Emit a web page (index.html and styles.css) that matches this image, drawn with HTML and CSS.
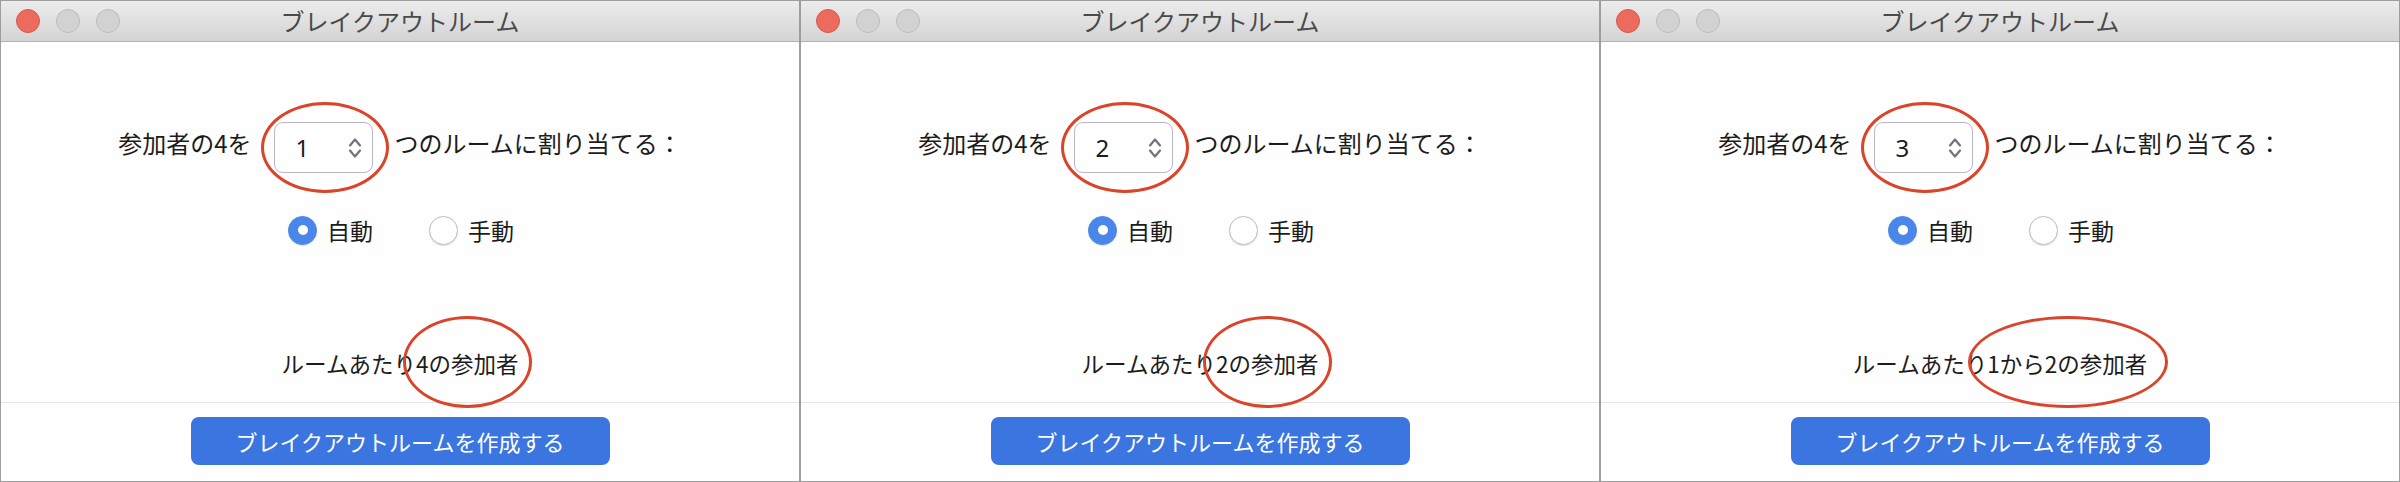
FILE: index.html
```html
<!DOCTYPE html>
<html lang="ja">
<head>
<meta charset="utf-8">
<title>ブレイクアウトルーム</title>
<link rel="stylesheet" href="styles.css">
</head>
<body>
<div class="screens">

  <section class="window">
    <header class="titlebar">
      <div class="lights"><span class="light close"></span><span class="light"></span><span class="light"></span></div>
      <h1 class="title">ブレイクアウトルーム</h1>
      <div></div>
    </header>
    <main class="content">
      <div class="assign">
        <span>参加者の4を</span>
        <div class="spinner"><span class="num">1</span>
          <svg class="arrows" width="14" height="24" viewBox="0 0 14 24"><polyline points="2,9.5 7,3.5 12,9.5"/><polyline points="2,14.5 7,20.5 12,14.5"/></svg>
        </div>
        <span>つのルームに割り当てる：</span>
      </div>
      <div class="modes">
        <label class="radio"><span class="dot on"></span>自動</label>
        <label class="radio"><span class="dot"></span>手動</label>
      </div>
      <p class="per">ルームあたり4の参加者</p>
    </main>
    <footer class="foot"><button class="create">ブレイクアウトルームを作成する</button></footer>
    <span class="mark mark-spin"></span>
    <span class="mark mark-per"></span>
  </section>

  <section class="window">
    <header class="titlebar">
      <div class="lights"><span class="light close"></span><span class="light"></span><span class="light"></span></div>
      <h1 class="title">ブレイクアウトルーム</h1>
      <div></div>
    </header>
    <main class="content">
      <div class="assign">
        <span>参加者の4を</span>
        <div class="spinner"><span class="num">2</span>
          <svg class="arrows" width="14" height="24" viewBox="0 0 14 24"><polyline points="2,9.5 7,3.5 12,9.5"/><polyline points="2,14.5 7,20.5 12,14.5"/></svg>
        </div>
        <span>つのルームに割り当てる：</span>
      </div>
      <div class="modes">
        <label class="radio"><span class="dot on"></span>自動</label>
        <label class="radio"><span class="dot"></span>手動</label>
      </div>
      <p class="per">ルームあたり2の参加者</p>
    </main>
    <footer class="foot"><button class="create">ブレイクアウトルームを作成する</button></footer>
    <span class="mark mark-spin"></span>
    <span class="mark mark-per"></span>
  </section>

  <section class="window">
    <header class="titlebar">
      <div class="lights"><span class="light close"></span><span class="light"></span><span class="light"></span></div>
      <h1 class="title">ブレイクアウトルーム</h1>
      <div></div>
    </header>
    <main class="content">
      <div class="assign">
        <span>参加者の4を</span>
        <div class="spinner"><span class="num">3</span>
          <svg class="arrows" width="14" height="24" viewBox="0 0 14 24"><polyline points="2,9.5 7,3.5 12,9.5"/><polyline points="2,14.5 7,20.5 12,14.5"/></svg>
        </div>
        <span>つのルームに割り当てる：</span>
      </div>
      <div class="modes">
        <label class="radio"><span class="dot on"></span>自動</label>
        <label class="radio"><span class="dot"></span>手動</label>
      </div>
      <p class="per">ルームあたり1から2の参加者</p>
    </main>
    <footer class="foot"><button class="create">ブレイクアウトルームを作成する</button></footer>
    <span class="mark mark-spin"></span>
    <span class="mark mark-per mark-wide"></span>
  </section>

</div>
</body>
</html>
```

FILE: styles.css
```css
* { box-sizing: border-box; }

html, body {
  margin: 0;
  padding: 0;
  background: #ffffff;
}

body {
  font-family: "Noto Sans CJK JP", "Noto Sans", sans-serif;
  color: #1c1c1c;
}

.screens {
  display: flex;
  width: 2400px;
  height: 482px;
}

.window {
  position: relative;
  width: 800px;
  height: 482px;
  flex: none;
  display: flex;
  flex-direction: column;
  border: 1px solid #9d9d9d;
  background: #fefefe;
}

.titlebar {
  height: 41px;
  flex: none;
  display: grid;
  grid-template-columns: 1fr auto 1fr;
  align-items: center;
  background: linear-gradient(#ececec, #d4d4d4);
  border-bottom: 1px solid #b3b3b3;
}

.lights {
  display: flex;
  gap: 16px;
  padding-left: 15px;
}

.light {
  width: 24px;
  height: 24px;
  border-radius: 50%;
  background: #d2d2d2;
  border: 1px solid #bcbcbc;
}

.light.close {
  background: #ec6a5e;
  border-color: #d4594e;
}

.title {
  margin: 0;
  font-size: 24px;
  font-weight: 400;
  color: #4a4a4a;
  line-height: 1;
  letter-spacing: 0;
}

.content {
  flex: 1;
  display: flex;
  flex-direction: column;
  align-items: center;
  padding-top: 71px;
}

.assign {
  display: flex;
  align-items: center;
  justify-content: center;
  gap: 22px;
  font-size: 24px;
  line-height: 30px;
  height: 60px;
}

.spinner {
  margin-top: 9px;
  width: 99px;
  height: 51px;
  border: 1.5px solid #b7b7c3;
  border-radius: 9px;
  display: flex;
  align-items: center;
  justify-content: space-between;
  padding: 0 10px 0 21px;
  background: #fff;
}

.num {
  font-size: 24px;
  line-height: 1;
  color: #1c1c1c;
  font-family: "Noto Sans", "Liberation Sans", sans-serif;
}

.arrows polyline {
  fill: none;
  stroke: #727280;
  stroke-width: 2.2;
  stroke-linecap: round;
  stroke-linejoin: round;
}

.modes {
  margin-top: 42px;
  display: flex;
  gap: 56px;
  height: 30px;
  padding-left: 2px;
}

.radio {
  display: flex;
  align-items: center;
  gap: 10px;
  font-size: 23px;
  line-height: 30px;
}

.dot {
  width: 29px;
  height: 29px;
  border-radius: 50%;
  background: #fff;
  border: 1px solid #bdbdbd;
  box-shadow: 0 1px 1px rgba(0,0,0,0.12);
  display: flex;
  align-items: center;
  justify-content: center;
}

.dot.on {
  background: #4a87ea;
  border-color: #4a87ea;
}

.dot.on::after {
  content: "";
  width: 10px;
  height: 10px;
  border-radius: 50%;
  background: #fff;
}

.per {
  margin: 103px 0 0;
  font-size: 22.5px;
  line-height: 30px;
}

.foot {
  flex: none;
  border-top: 1px solid #e6e6e6;
  padding: 14px 0 16px;
  display: flex;
  justify-content: center;
}

.create {
  width: 419px;
  height: 48px;
  border: none;
  border-radius: 8px;
  background: #3b75e0;
  color: #fff;
  font-family: inherit;
  font-size: 22px;
  line-height: 1;
  padding: 0;
}

.mark {
  position: absolute;
  border: 3px solid #d9442a;
  border-radius: 50%;
  pointer-events: none;
}

.mark-spin {
  left: 260px;
  top: 101px;
  width: 128px;
  height: 91px;
}

.mark-per {
  left: 402px;
  top: 315px;
  width: 129px;
  height: 92px;
}

.mark-per.mark-wide {
  left: 367px;
  width: 200px;
}
```
